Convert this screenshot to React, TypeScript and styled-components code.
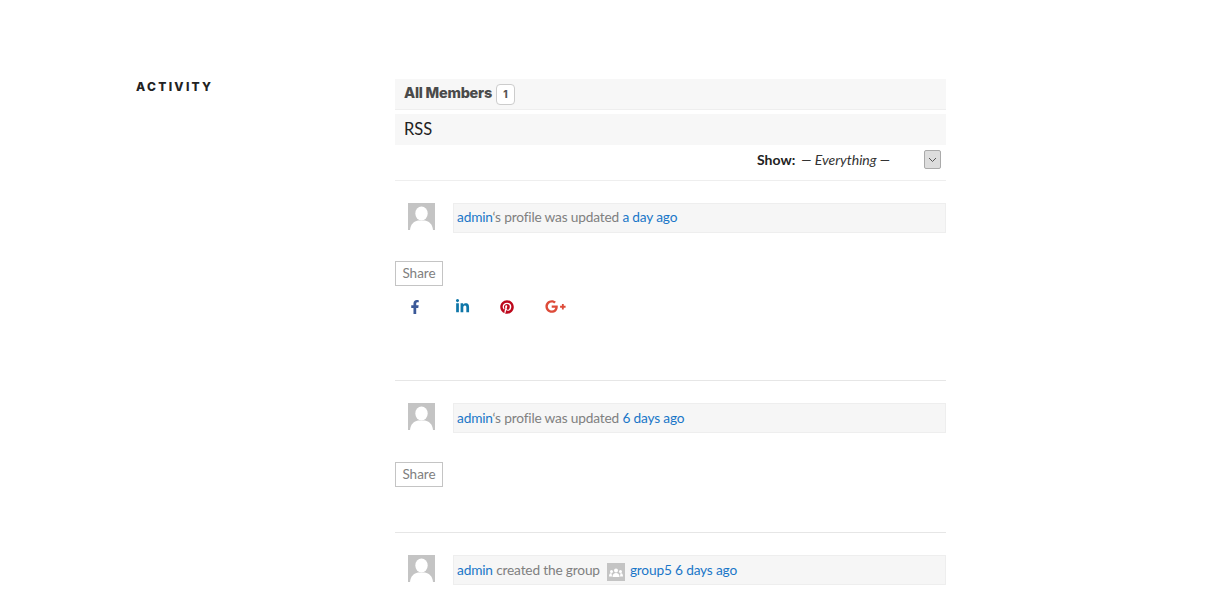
import React from 'react'
import styled, { createGlobalStyle } from 'styled-components'
import { FaFacebookF, FaLinkedinIn, FaPinterest, FaGooglePlusG } from 'react-icons/fa'

const GlobalStyle = createGlobalStyle`
  html, body {
    margin: 0;
    padding: 0;
    background: #fff;
    height: 596px;
    overflow: hidden;
    font-family: Lato, "Liberation Sans", sans-serif;
  }
`
const Page = styled.div`
  display: flex;
  padding: 79px 0 0 136px;
  width: 810px;
`
const Title = styled.h2`
  width: 259px;
  margin: 0;
  font-family: Inter, "Liberation Sans", sans-serif;
  font-size: 12px;
  line-height: 15px;
  font-weight: 800;
  letter-spacing: 2.3px;
  color: #222;
`
const Main = styled.main`
  width: 551px;
`
const Tabs = styled.div`
  height: 27px;
  padding: 0 0 3px 9px;
  background: #f7f7f7;
  border-bottom: 1px solid #eee;
  display: flex;
  align-items: center;
  font-family: Inter, "Liberation Sans", sans-serif;
  font-size: 14.5px;
  font-weight: 800;
  letter-spacing: -0.25px;
  color: #4a4a4a;
`
const Count = styled.span`
  display: inline-flex;
  align-items: center;
  justify-content: center;
  width: 17px;
  height: 19px;
  margin-left: 4px;
  margin-top: 3px;
  border: 1px solid #ccc;
  border-radius: 4px;
  font-size: 10px;
  letter-spacing: 0;
  color: #555;
  background: #fff;
`
const Rss = styled.div`
  margin-top: 4px;
  height: 31px;
  background: #f7f7f7;
  padding-left: 9px;
  font-size: 16.5px;
  line-height: 30px;
  color: #222;
`
const Filter = styled.div`
  height: 28px;
  padding: 0 0 7px 362px;
  border-bottom: 1px solid #eee;
  display: flex;
  align-items: center;
  font-size: 14px;
  color: #333;
`
const FilterLabel = styled.strong`
  font-weight: 700;
  color: #222;
  margin-right: 6px;
`
const FilterValue = styled.em`
  width: 123px;
`
const SelectButton = styled.span`
  display: flex;
  align-items: center;
  justify-content: center;
  width: 15px;
  height: 17px;
  background: #ddd;
  border: 1px solid #aaa;
  border-radius: 2px;
  color: #555;
`
const Item = styled.article<{ $height: number; $last?: boolean }>`
  height: ${props => props.$height}px;
  box-sizing: border-box;
  padding-top: 22px;
  border-bottom: ${props => (props.$last ? 'none' : '1px solid #e6e6e6')};
`
const Row = styled.div`
  display: flex;
  padding-left: 13px;
`
const Avatar = styled.svg`
  width: 27px;
  height: 27px;
  margin-right: 18px;
  flex: none;
`
const Bubble = styled.div<{ $lineHeight: number }>`
  flex: 1;
  height: 30px;
  box-sizing: border-box;
  background: #f6f6f6;
  border: 1px solid #eee;
  padding-left: 3px;
  font-size: 13.7px;
  letter-spacing: -0.17px;
  line-height: ${props => props.$lineHeight}px;
  color: #808080;
  white-space: pre;
`
const Anchor = styled.a`
  color: #1a76c8;
  text-decoration: none;
`
const GroupIcon = styled.svg`
  width: 18px;
  height: 18px;
  margin: 0 5px 0 7px;
  vertical-align: middle;
`
const ShareButton = styled.button<{ $top: number }>`
  display: block;
  width: 48px;
  height: 25px;
  margin-top: ${props => props.$top}px;
  padding: 0 0 1px;
  background: #fff;
  border: 1px solid #c4c4c4;
  font-family: Lato, sans-serif;
  font-size: 13.5px;
  color: #808080;
`
const Socials = styled.div`
  display: flex;
  align-items: center;
  margin-top: 10px;
  padding-left: 13px;
`
const Social = styled.a<{ $color: string; $width: number }>`
  display: flex;
  width: ${props => props.$width}px;
  color: ${props => props.$color};
`

const UserAvatar = () => (
  <Avatar viewBox="0 0 27 27">
    <rect width="27" height="27" fill="#c4c4c4" />
    <ellipse cx="13.5" cy="10.5" rx="6.2" ry="7" fill="#fff" />
    <path d="M2 27c.5-6 4-8.500 8-9.500h7c4 1 7.500 3.500 8 9.500z" fill="#fff" />
  </Avatar>
)

const App = () => {
  return (
    <>
      <GlobalStyle />
      <Page>
        <Title>ACTIVITY</Title>
        <Main>
          <Tabs>
            All Members<Count>1</Count>
          </Tabs>
          <Rss>RSS</Rss>
          <Filter>
            <FilterLabel>Show:</FilterLabel>
            <FilterValue>— Everything —</FilterValue>
            <SelectButton>
              <svg width="9" height="9" viewBox="0 0 9 9" fill="none" stroke="#555" strokeWidth="1">
                <path d="M1 3l3.500 3.500L8 3" />
              </svg>
            </SelectButton>
          </Filter>
          <Item $height={200}>
            <Row>
              <UserAvatar />
              <Bubble $lineHeight={25}>
                <Anchor href="#">admin</Anchor>‘s profile was updated <Anchor href="#">a day ago</Anchor>
              </Bubble>
            </Row>
            <ShareButton $top={28}>Share</ShareButton>
            <Socials>
              <Social href="#" $color="#3b5998" $width={47}><FaFacebookF size={14} /></Social>
              <Social href="#" $color="#0e76a8" $width={45}><FaLinkedinIn size={15} /></Social>
              <Social href="#" $color="#bd081c" $width={45}><FaPinterest size={14} /></Social>
              <Social href="#" $color="#dd4b39" $width={30}><FaGooglePlusG size={21} /></Social>
            </Socials>
          </Item>
          <Item $height={152}>
            <Row>
              <UserAvatar />
              <Bubble $lineHeight={27}>
                <Anchor href="#">admin</Anchor>‘s profile was updated <Anchor href="#">6 days ago</Anchor>
              </Bubble>
            </Row>
            <ShareButton $top={29}>Share</ShareButton>
          </Item>
          <Item $height={64} $last>
            <Row>
              <UserAvatar />
              <Bubble $lineHeight={27}>
                <Anchor href="#">admin</Anchor> created the group
                <GroupIcon viewBox="0 0 18 18">
                  <rect width="18" height="18" fill="#c4c4c4" />
                  <circle cx="9" cy="7.500" r="2" fill="#fff" />
                  <path d="M5.500 14c0-3 1.500-4 3.500-4s3.500 1 3.500 4z" fill="#fff" />
                  <circle cx="4.500" cy="8.500" r="1.500" fill="#fff" />
                  <path d="M2 13.500c0-2.500 1-3.500 2.500-3.500l.5 3.500z" fill="#fff" />
                  <circle cx="13.500" cy="8.500" r="1.500" fill="#fff" />
                  <path d="M16 13.500c0-2.500-1-3.500-2.500-3.500l-.5 3.500z" fill="#fff" />
                </GroupIcon>
                <Anchor href="#">group5</Anchor> <Anchor href="#">6 days ago</Anchor>
              </Bubble>
            </Row>
          </Item>
        </Main>
      </Page>
    </>
  )
}

export default App
